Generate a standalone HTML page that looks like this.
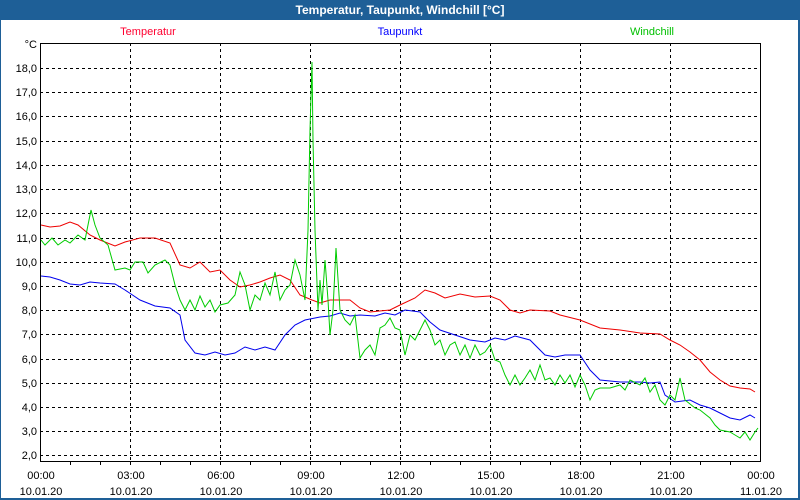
<!DOCTYPE html>
<html><head><style>
body{margin:0;width:800px;height:500px;overflow:hidden;background:#1e5f97;font-family:"Liberation Sans",sans-serif}
</style></head><body>
<svg width="800" height="500" xmlns="http://www.w3.org/2000/svg" style="display:block">
<rect x="0" y="0" width="800" height="500" fill="#1e5f97"/>
<text x="400" y="14" fill="#fff" font-size="12" font-weight="bold" text-anchor="middle" font-family="Liberation Sans,sans-serif">Temperatur, Taupunkt, Windchill [°C]</text>
<rect x="1" y="20" width="797" height="478" fill="#fff"/>
<g font-family="Liberation Sans,sans-serif" font-size="11">
<text x="148" y="35" fill="#ff0030" text-anchor="middle">Temperatur</text>
<text x="400" y="35" fill="#0000ff" text-anchor="middle">Taupunkt</text>
<text x="652" y="35" fill="#00c000" text-anchor="middle">Windchill</text>
</g>
<g stroke="#000" stroke-dasharray="3,3" stroke-width="1">
<line x1="40" x2="760" y1="43.5" y2="43.5"/>
<line x1="40" x2="760" y1="68.5" y2="68.5"/><line x1="40" x2="760" y1="92.5" y2="92.5"/><line x1="40" x2="760" y1="116.5" y2="116.5"/><line x1="40" x2="760" y1="141.5" y2="141.5"/><line x1="40" x2="760" y1="165.5" y2="165.5"/><line x1="40" x2="760" y1="189.5" y2="189.5"/><line x1="40" x2="760" y1="213.5" y2="213.5"/><line x1="40" x2="760" y1="238.5" y2="238.5"/><line x1="40" x2="760" y1="262.5" y2="262.5"/><line x1="40" x2="760" y1="286.5" y2="286.5"/><line x1="40" x2="760" y1="310.5" y2="310.5"/><line x1="40" x2="760" y1="334.5" y2="334.5"/><line x1="40" x2="760" y1="359.5" y2="359.5"/><line x1="40" x2="760" y1="383.5" y2="383.5"/><line x1="40" x2="760" y1="407.5" y2="407.5"/><line x1="40" x2="760" y1="431.5" y2="431.5"/><line x1="40" x2="760" y1="455.5" y2="455.5"/>
<line y1="43" y2="461" x1="130.5" x2="130.5"/><line y1="43" y2="461" x1="220.5" x2="220.5"/><line y1="43" y2="461" x1="310.5" x2="310.5"/><line y1="43" y2="461" x1="400.5" x2="400.5"/><line y1="43" y2="461" x1="490.5" x2="490.5"/><line y1="43" y2="461" x1="580.5" x2="580.5"/><line y1="43" y2="461" x1="670.5" x2="670.5"/>
</g>
<rect x="40.5" y="43.5" width="720" height="418" fill="none" stroke="#000"/>
<g stroke="#000">
<line x1="70.5" x2="70.5" y1="461" y2="465"/><line x1="100.5" x2="100.5" y1="461" y2="465"/><line x1="130.5" x2="130.5" y1="461" y2="465"/><line x1="160.5" x2="160.5" y1="461" y2="465"/><line x1="190.5" x2="190.5" y1="461" y2="465"/><line x1="220.5" x2="220.5" y1="461" y2="465"/><line x1="250.5" x2="250.5" y1="461" y2="465"/><line x1="280.5" x2="280.5" y1="461" y2="465"/><line x1="310.5" x2="310.5" y1="461" y2="465"/><line x1="340.5" x2="340.5" y1="461" y2="465"/><line x1="370.5" x2="370.5" y1="461" y2="465"/><line x1="400.5" x2="400.5" y1="461" y2="465"/><line x1="430.5" x2="430.5" y1="461" y2="465"/><line x1="460.5" x2="460.5" y1="461" y2="465"/><line x1="490.5" x2="490.5" y1="461" y2="465"/><line x1="520.5" x2="520.5" y1="461" y2="465"/><line x1="550.5" x2="550.5" y1="461" y2="465"/><line x1="580.5" x2="580.5" y1="461" y2="465"/><line x1="610.5" x2="610.5" y1="461" y2="465"/><line x1="640.5" x2="640.5" y1="461" y2="465"/><line x1="670.5" x2="670.5" y1="461" y2="465"/><line x1="700.5" x2="700.5" y1="461" y2="465"/><line x1="730.5" x2="730.5" y1="461" y2="465"/>
</g>
<g font-family="Liberation Sans,sans-serif" font-size="11" fill="#000" text-anchor="end">
<text x="37" y="48">°C</text>
<text x="37" y="72">18,0</text><text x="37" y="96">17,0</text><text x="37" y="120">16,0</text><text x="37" y="145">15,0</text><text x="37" y="169">14,0</text><text x="37" y="193">13,0</text><text x="37" y="217">12,0</text><text x="37" y="242">11,0</text><text x="37" y="266">10,0</text><text x="37" y="290">9,0</text><text x="37" y="314">8,0</text><text x="37" y="338">7,0</text><text x="37" y="363">6,0</text><text x="37" y="387">5,0</text><text x="37" y="411">4,0</text><text x="37" y="435">3,0</text><text x="37" y="459">2,0</text>
</g>
<g font-family="Liberation Sans,sans-serif" font-size="11" fill="#000" text-anchor="middle">
<text x="41" y="479">00:00</text><text x="41" y="495">10.01.20</text>
<text x="131" y="479">03:00</text><text x="131" y="495">10.01.20</text>
<text x="221" y="479">06:00</text><text x="221" y="495">10.01.20</text>
<text x="311" y="479">09:00</text><text x="311" y="495">10.01.20</text>
<text x="401" y="479">12:00</text><text x="401" y="495">10.01.20</text>
<text x="491" y="479">15:00</text><text x="491" y="495">10.01.20</text>
<text x="581" y="479">18:00</text><text x="581" y="495">10.01.20</text>
<text x="671" y="479">21:00</text><text x="671" y="495">10.01.20</text>
<text x="761" y="479">00:00</text><text x="761" y="495">11.01.20</text>
</g>
<polyline fill="none" stroke="#ee0000" stroke-width="1" points="41,225 50,227 60,226 70,222 78,225 90,235 100,240 115,246 125,242 140,238 155,238 170,243 180,265 190,268 200,262 210,272 220,270 230,280 240,287 250,285 260,282 270,278 280,275 290,280 300,295 312,300 320,303 330,300 350,300 360,308 370,312 390,310 400,305 415,298 425,290 435,293 445,298 460,294 475,297 490,296 500,300 510,310 520,313 530,310 550,311 560,315 580,320 600,328 620,330 640,333 660,334 670,340 680,345 690,352 700,360 710,372 720,380 730,386 740,388 750,389 755,392"/>
<polyline fill="none" stroke="#0000ee" stroke-width="1" points="41,276 50,277 60,280 70,284 80,285 90,282 100,283 115,284 125,290 140,300 155,306 170,308 180,315 185,340 195,353 205,355 215,352 225,355 235,353 245,347 255,350 265,347 275,350 285,335 295,325 305,320 320,317 330,316 340,313 350,316 360,315 375,316 385,313 395,315 405,310 420,312 430,322 440,330 455,335 470,340 485,342 495,338 505,340 515,336 530,340 545,355 555,357 565,355 580,355 590,370 600,380 620,382 640,382 650,383 660,382 665,395 675,402 690,400 700,405 710,408 720,413 730,418 740,420 750,415 755,418"/>
<polyline fill="none" stroke="#00cc00" stroke-width="1" points="41,240 45,245 52,238 58,245 65,240 70,243 78,235 85,240 91,210 95,225 100,238 108,245 115,270 125,268 130,270 135,262 143,262 148,273 155,265 165,260 170,265 175,285 180,300 185,310 190,300 195,310 200,296 205,307 210,300 215,312 220,305 228,303 235,295 240,272 245,285 250,310 255,295 260,300 265,283 270,295 275,272 280,300 285,290 290,285 295,260 300,275 305,300 308,230 310,130 312,62 313,140 315,230 318,310 320,280 322,305 325,260 328,300 330,335 333,310 336,248 340,310 345,320 350,325 355,315 360,358 365,350 370,345 375,355 380,328 385,325 390,318 395,328 400,330 405,355 410,335 415,340 420,330 425,320 430,330 435,345 440,340 445,355 450,345 455,342 460,355 465,345 470,358 475,345 480,355 485,352 490,345 495,360 500,362 505,375 510,385 515,375 520,385 525,378 530,370 535,380 540,365 545,380 550,378 555,385 560,375 565,383 570,375 575,387 580,375 585,385 590,400 595,390 600,388 610,388 620,385 625,390 630,380 640,385 645,378 650,392 655,385 660,400 665,405 670,395 675,400 680,378 685,400 695,408 700,410 710,418 715,425 720,430 730,432 735,435 740,438 745,432 750,440 755,432 758,428"/>
</svg>
</body></html>
